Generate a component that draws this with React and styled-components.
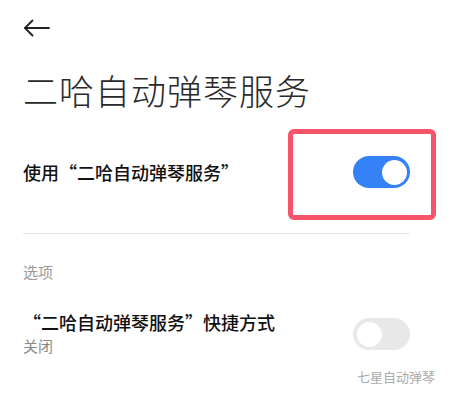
import React from 'react'
import styled, { createGlobalStyle } from 'styled-components'

const Global = createGlobalStyle`
  html, body {
    margin: 0;
    padding: 0;
    background: #fff;
  }
  body {
    font-family: "Noto Sans CJK SC", "Noto Sans", sans-serif;
    color: #1a1a1a;
  }
`

const BackArrow = () => (
  <svg width="28" height="18" viewBox="0 0 28 18" fill="none" stroke="#222" strokeWidth="1.8" strokeLinecap="round" strokeLinejoin="round">
    <path d="M26 9H2" />
    <path d="M9.5 1.5L2 9l7.5 7.5" />
  </svg>
)

export default function App() {
  return (
    <>
      <Global />
      <Page>
        <Header>
          <BackArrow />
        </Header>
        <Title>二哈自动弹琴服务</Title>

        <Row $height={116} $top={0}>
          <Label>
            <Primary>使用“二哈自动弹琴服务”</Primary>
          </Label>
          <Highlight>
            <Switch $on />
          </Highlight>
        </Row>

        <Divider />
        <Section>选项</Section>

        <Row $height={60} $top={22}>
          <Label>
            <Primary>“二哈自动弹琴服务”快捷方式</Primary>
            <Secondary>关闭</Secondary>
          </Label>
          <Switch />
        </Row>

        <Watermark>七星自动弹琴</Watermark>
      </Page>
    </>
  )
}

// ------- STYLES -------
const Page = styled.div`
  width: 450px;
  height: 405px;
  box-sizing: border-box;
  padding: 0 40px 0 23px;
  overflow: hidden;
`

const Header = styled.div`
  height: 56px;
  display: flex;
  align-items: center;
`

const Title = styled.h1`
  margin: 10px 0 0;
  font-size: 35px;
  line-height: 48px;
  font-weight: 300;
  color: #2a2a2a;
  letter-spacing: 1px;
`

const Row = styled.div`
  display: flex;
  align-items: center;
  justify-content: space-between;
  height: ${p => p.$height}px;
  margin-top: ${p => p.$top}px;
`

const Label = styled.div`
  display: flex;
  flex-direction: column;
`

const Primary = styled.span`
  font-size: 18px;
  line-height: 24px;
  font-weight: 500;
  color: #111;
`

const Secondary = styled.span`
  font-size: 15px;
  line-height: 24px;
  color: #888;
`

const Highlight = styled.div`
  position: relative;
  display: flex;
  &::before {
    content: '';
    position: absolute;
    left: -65px;
    right: -26px;
    top: -27px;
    bottom: -32px;
    border: 5px solid #f5546a;
    border-radius: 6px;
  }
`

const Switch = styled.div`
  position: relative;
  width: 57px;
  height: 32px;
  border-radius: 16px;
  background: ${p => (p.$on ? '#3582f6' : '#e8e8e8')};
  flex-shrink: 0;
  &::after {
    content: '';
    position: absolute;
    top: 3.5px;
    ${p => (p.$on ? 'right: 3.5px;' : 'left: 3.5px;')}
    width: 25px;
    height: 25px;
    border-radius: 50%;
    background: #fff;
  }
`

const Divider = styled.div`
  height: 1px;
  margin-top: 3px;
  background: #e6e6e6;
`

const Section = styled.div`
  margin-top: 28px;
  font-size: 15px;
  line-height: 20px;
  color: #999;
`

const Watermark = styled.div`
  margin: 4px -25px 0 0;
  text-align: right;
  font-size: 13px;
  line-height: 18px;
  color: #aaa;
`
